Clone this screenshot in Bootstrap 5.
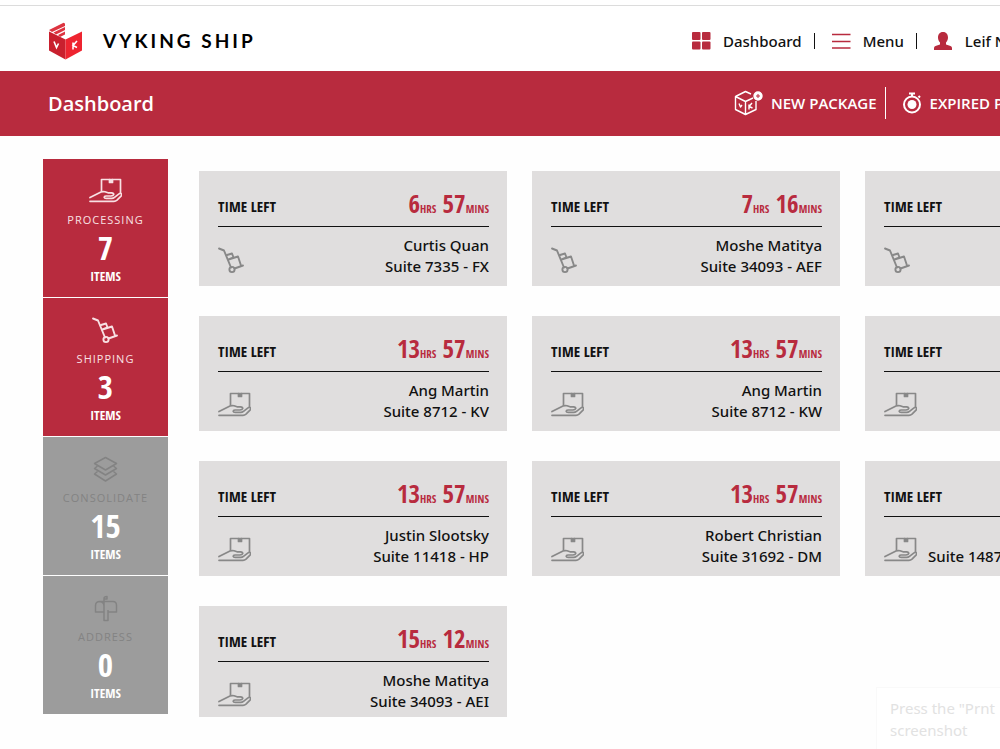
<!DOCTYPE html>
<html lang="en">
<head>
<meta charset="utf-8">
<meta name="viewport" content="width=device-width, initial-scale=1">
<title>Vyking Ship - Dashboard</title>
<link href="https://cdn.jsdelivr.net/npm/bootstrap@5.3.0/dist/css/bootstrap.min.css" rel="stylesheet">
<style>
  :root { --brand: #b82b3e; --tile: #e0dede; }
  body { font-family: "Noto Sans", "Open Sans", sans-serif; font-weight: 500; color: #111; background: #fefefe; overflow: hidden; min-height: 100vh; }
  a { color: inherit; text-decoration: none; }
  .shell { min-width: 1216px; }
  .topbar { height: 71px; padding: 11px 0 0 48px; background: #fff; position: relative; }
  .topbar::before { content: ""; position: absolute; left: 0; right: 0; top: 5px; height: 1px; background: #dcdcdc; }
  .wordmark { font: 700 19px/24px Lato, sans-serif; letter-spacing: 3px; color: #000; }
  .topnav { width: 525px; font-size: 15px; line-height: 24px; }
  .topnav svg { color: var(--brand); }
  .rule { width: 1px; background: currentColor; }
  .topnav .rule { margin: 0 16px 0 12px; }
  .band { height: 65px; padding-left: 48px; background: var(--brand); }
  .band h1 { font-family: "Open Sans", sans-serif; font-size: 20px; line-height: 28px; font-weight: 600; }
  .actions { width: 482px; font-family: "Open Sans", sans-serif; font-size: 15px; font-weight: 600; line-height: 20px; padding-bottom: 2px; }
  .content-area { padding: 23px 43px 0; }
  .stages { width: 125px; gap: 1px; }
  .stage { height: 138px; padding-top: 19px; background: var(--brand); }
  .stage svg { display: block; color: #f8e0e3; }
  .stage.idle { background: #9c9c9c; }
  .stage.idle svg, .stage.idle .stage-name { color: #838383; }
  .stage-name { font-family: "Open Sans", sans-serif; font-size: 11px; line-height: 18px; letter-spacing: 1px; font-weight: 400; color: #f8e0e3; margin-top: 6px; }
  .narrow { font-family: "Open Sans Condensed", "Noto Sans Condensed", "Liberation Sans Narrow", sans-serif; font-weight: 700; }
  .stage-count { font-size: 33px; line-height: 38px; }
  .stage-unit { font-size: 13px; line-height: 18px; }
  .tiles { display: grid; grid-template-columns: repeat(3, minmax(308px, 1fr)); grid-template-rows: repeat(3, 115px) auto; gap: 30px 25px; margin: 12px 0 0 31px; }
  .tile { background: var(--tile); padding: 16px 18px 5px 19px; }
  .tile-head { height: 40px; border-bottom: 1px solid #111; }
  .tile-label { font-size: 15px; line-height: 20px; padding-top: 9px; }
  .tile-time { font-size: 25px; line-height: 32px; color: var(--brand); }
  .tile-time small { font-size: 11px; }
  .tile-foot { padding-top: 8px; font-size: 15px; line-height: 21px; gap: 11px; }
  .tile-foot svg { color: #888; flex: none; margin-top: 12px; }
  .hint { right: 0; bottom: 0; width: 124px; height: 62px; padding: 9px 0 0 13px; font-size: 15px; line-height: 22px; font-weight: 400; color: #e2e2e2; background: #fff; border-left: 1px solid #f9f9f9; border-top: 1px solid #f9f9f9; }
</style>
</head>
<body>
<svg class="d-none" xmlns="http://www.w3.org/2000/svg">
  <symbol id="hand" viewBox="0 0 33 27"><g fill="none" stroke="currentColor" stroke-width="1.700" stroke-linejoin="round" stroke-linecap="round"><path d="M12.500 13V1.500H31.500V15"/><path d="M20.500 1.500v3h3v-3" fill="currentColor"/><path d="M1 19.500 12 14q2-.8 4-.2l3 1h3.500q2.500.3 2.200 1.800-.4 1.400-2.700 1.400h-5q-1.800.1-1.800 1.300.2 1.100 2 1.100h5.500q1.500 0 2.800-1l4.500-3.500q1.500-1 2.500 0 .6 1-.5 2.200l-4 4q-1.300 1.200-3 1.200H1"/></g></symbol>
  <symbol id="cart" viewBox="0 0 27 27"><g fill="none" stroke="currentColor" stroke-width="1.900" stroke-linejoin="round" stroke-linecap="round"><path d="M1 1.500 6 3.500 13 20.500M16.500 21.500 25 18.500"/><circle cx="14" cy="22.500" r="2.600"/><path d="M9 8 14 6.500 15.500 10.500 10.500 12.500M10.500 12.500 20 9.500 23 18.500"/></g></symbol>
  <symbol id="layers" viewBox="0 0 25 27"><g fill="none" stroke="currentColor" stroke-width="1.500" stroke-linejoin="round"><path d="M12.500 1.500 23.500 7.500 12.500 14 1.500 7.500Z"/><path d="M4.500 10 1.500 12.500 12.500 19 23.500 12.500 20.500 10M4.500 15.500 1.500 18 12.500 25 23.500 18 20.500 15.500"/></g></symbol>
  <symbol id="mailbox" viewBox="0 0 24 27"><g fill="none" stroke="currentColor" stroke-width="1.500" stroke-linejoin="round"><path d="M10 17H1.500V10.500Q1.500 6.500 6 6.500H19Q22.500 6.500 22.500 10.500V17H14M6 6.500Q10 7 10 11V25.500H14V15M10 15V3.500Q10 1.500 13 1.500V4H10"/></g></symbol>
</svg>

<div class="shell">
  <header class="topbar d-flex align-items-center">
    <a href="#" class="d-flex align-items-center">
      <svg width="35" height="38" viewBox="0 0 35 38" aria-hidden="true">
        <path d="M1 9.500 17.500 17.500V37.500L1 28.500Z" fill="#c9202e"/><path d="M34 9.500 17.500 17.500V37.500L34 28.500Z" fill="#ee2430"/>
        <path d="M1 8 15.500.800 17 1.600V4L4 10ZM5.500 10.500 17 5V8L8 12.500ZM10 13 17 9.500V12.500L12 15Z" fill="#dd3440"/>
        <path d="M6 19.500 8.500 25.500 10.500 21.500M25 20.500V27.500M29 19 25 23.500 29 25.500" stroke="#fff" stroke-width="1.600" fill="none"/>
      </svg>
      <span class="wordmark ms-3 ps-1">VYKING SHIP</span>
    </a>
    <nav class="topnav ms-auto d-flex align-items-center" aria-label="Main">
      <a href="#" class="d-flex align-items-center"><svg width="20" height="18" viewBox="0 0 20 18" fill="currentColor"><rect x="1" width="8.500" height="8" rx="1"/><rect x="11" width="8.500" height="8" rx="1"/><rect x="1" y="9.500" width="8.500" height="8" rx="1"/><rect x="11" y="9.500" width="8.500" height="8" rx="1"/></svg><span class="ms-2 ps-1">Dashboard</span></a>
      <span class="rule py-2"></span>
      <a href="#" class="d-flex align-items-center"><svg width="20" height="18" viewBox="0 0 20 18" stroke="currentColor" stroke-width="1.500"><path d="M1 2.500H19.500M1 9.500H19.500M1 16H19.500"/></svg><span class="ms-2 ps-1">Menu</span></a>
      <span class="rule py-2"></span>
      <a href="#" class="d-flex align-items-center"><svg width="20" height="19" viewBox="0 0 20 19" fill="currentColor"><path d="M10 0c3.500 0 5 2.500 5 5.500 0 2-.8 3.900-2 5v2l4.500 1.500q1.500.6 1.500 2v2H1v-2q0-1.400 1.500-2L7 12.500v-2c-1.200-1.100-2-3-2-5C5 2.500 6.500 0 10 0Z"/></svg><span class="ms-2 ps-1 text-nowrap">Leif N</span></a>
    </nav>
  </header>

  <div class="band d-flex align-items-center text-white">
    <h1 class="m-0">Dashboard</h1>
    <div class="actions ms-auto d-flex align-items-center">
      <a href="#" class="d-flex align-items-center"><svg width="29" height="26" viewBox="0 0 29 26" fill="none" stroke="#fff" stroke-width="1.400" stroke-linejoin="round"><path d="M1.500 6.500 11.500 1.500 17 4M22 11V19.500L11.500 24.500 1.500 19.500V6.500L11.500 11.500 19 8M11.500 11.500V24.500"/><path d="M5 13.500 6.500 17 8 15M15 14.500V19.500M18 13 15 16.500 18.500 18"/><circle cx="24" cy="6" r="4" fill="#fff"/><path d="M24 4V8M22 6H26" stroke="#b82b3e" stroke-width="1"/></svg><span class="ms-2">NEW PACKAGE</span></a>
      <span class="rule mx-2 py-3"></span>
      <a href="#" class="d-flex align-items-center ms-2"><svg width="20" height="22" viewBox="0 0 20 22" fill="none" stroke="#fff" stroke-width="2"><circle cx="10" cy="12.500" r="8"/><circle cx="10" cy="12.500" r="4.500" fill="#fff" stroke="none"/><path d="M7 1.500H13M10 1.500V5M16.500 4 18 5.500"/></svg><span class="ms-2 text-nowrap">EXPIRED P</span></a>
    </div>
  </div>

  <main class="content-area d-flex align-items-start">
    <div class="stages d-flex flex-column flex-shrink-0 text-center text-white">
      <a href="#" class="stage d-flex flex-column align-items-center"><svg width="33" height="27"><use href="#hand"/></svg><span class="stage-name">PROCESSING</span><span class="stage-count narrow">7</span><span class="stage-unit narrow">ITEMS</span></a>
      <a href="#" class="stage d-flex flex-column align-items-center"><svg width="27" height="27"><use href="#cart"/></svg><span class="stage-name">SHIPPING</span><span class="stage-count narrow">3</span><span class="stage-unit narrow">ITEMS</span></a>
      <a href="#" class="stage idle d-flex flex-column align-items-center"><svg width="25" height="27"><use href="#layers"/></svg><span class="stage-name">CONSOLIDATE</span><span class="stage-count narrow">15</span><span class="stage-unit narrow">ITEMS</span></a>
      <a href="#" class="stage idle d-flex flex-column align-items-center"><svg width="24" height="27"><use href="#mailbox"/></svg><span class="stage-name">ADDRESS</span><span class="stage-count narrow">0</span><span class="stage-unit narrow">ITEMS</span></a>
    </div>

    <div class="tiles flex-grow-1">
      <article class="tile"><div class="tile-head d-flex justify-content-between"><span class="tile-label narrow">TIME LEFT</span><span class="tile-time narrow">6<small>HRS</small> 57<small>MINS</small></span></div><div class="tile-foot d-flex justify-content-between"><svg width="27" height="27"><use href="#cart"/></svg><div class="text-end">Curtis Quan<br>Suite 7335 - FX</div></div></article>
      <article class="tile"><div class="tile-head d-flex justify-content-between"><span class="tile-label narrow">TIME LEFT</span><span class="tile-time narrow">7<small>HRS</small> 16<small>MINS</small></span></div><div class="tile-foot d-flex justify-content-between"><svg width="27" height="27"><use href="#cart"/></svg><div class="text-end">Moshe Matitya<br>Suite 34093 - AEF</div></div></article>
      <article class="tile"><div class="tile-head d-flex"><span class="tile-label narrow">TIME LEFT</span></div><div class="tile-foot d-flex"><svg width="27" height="27"><use href="#cart"/></svg></div></article>

      <article class="tile"><div class="tile-head d-flex justify-content-between"><span class="tile-label narrow">TIME LEFT</span><span class="tile-time narrow">13<small>HRS</small> 57<small>MINS</small></span></div><div class="tile-foot d-flex justify-content-between"><svg width="33" height="27"><use href="#hand"/></svg><div class="text-end">Ang Martin<br>Suite 8712 - KV</div></div></article>
      <article class="tile"><div class="tile-head d-flex justify-content-between"><span class="tile-label narrow">TIME LEFT</span><span class="tile-time narrow">13<small>HRS</small> 57<small>MINS</small></span></div><div class="tile-foot d-flex justify-content-between"><svg width="33" height="27"><use href="#hand"/></svg><div class="text-end">Ang Martin<br>Suite 8712 - KW</div></div></article>
      <article class="tile"><div class="tile-head d-flex"><span class="tile-label narrow">TIME LEFT</span></div><div class="tile-foot d-flex"><svg width="33" height="27"><use href="#hand"/></svg></div></article>

      <article class="tile"><div class="tile-head d-flex justify-content-between"><span class="tile-label narrow">TIME LEFT</span><span class="tile-time narrow">13<small>HRS</small> 57<small>MINS</small></span></div><div class="tile-foot d-flex justify-content-between"><svg width="33" height="27"><use href="#hand"/></svg><div class="text-end">Justin Slootsky<br>Suite 11418 - HP</div></div></article>
      <article class="tile"><div class="tile-head d-flex justify-content-between"><span class="tile-label narrow">TIME LEFT</span><span class="tile-time narrow">13<small>HRS</small> 57<small>MINS</small></span></div><div class="tile-foot d-flex justify-content-between"><svg width="33" height="27"><use href="#hand"/></svg><div class="text-end">Robert Christian<br>Suite 31692 - DM</div></div></article>
      <article class="tile"><div class="tile-head d-flex"><span class="tile-label narrow">TIME LEFT</span></div><div class="tile-foot d-flex"><svg width="33" height="27"><use href="#hand"/></svg><div><br>Suite 1487</div></div></article>

      <article class="tile"><div class="tile-head d-flex justify-content-between"><span class="tile-label narrow">TIME LEFT</span><span class="tile-time narrow">15<small>HRS</small> 12<small>MINS</small></span></div><div class="tile-foot d-flex justify-content-between"><svg width="33" height="27"><use href="#hand"/></svg><div class="text-end">Moshe Matitya<br>Suite 34093 - AEI</div></div></article>
    </div>
  </main>
</div>

<div class="hint position-fixed overflow-hidden text-nowrap" role="status">Press the "Prnt<br>screenshot</div>
<script src="https://cdn.jsdelivr.net/npm/bootstrap@5.3.0/dist/js/bootstrap.bundle.min.js"></script>
</body>
</html>
